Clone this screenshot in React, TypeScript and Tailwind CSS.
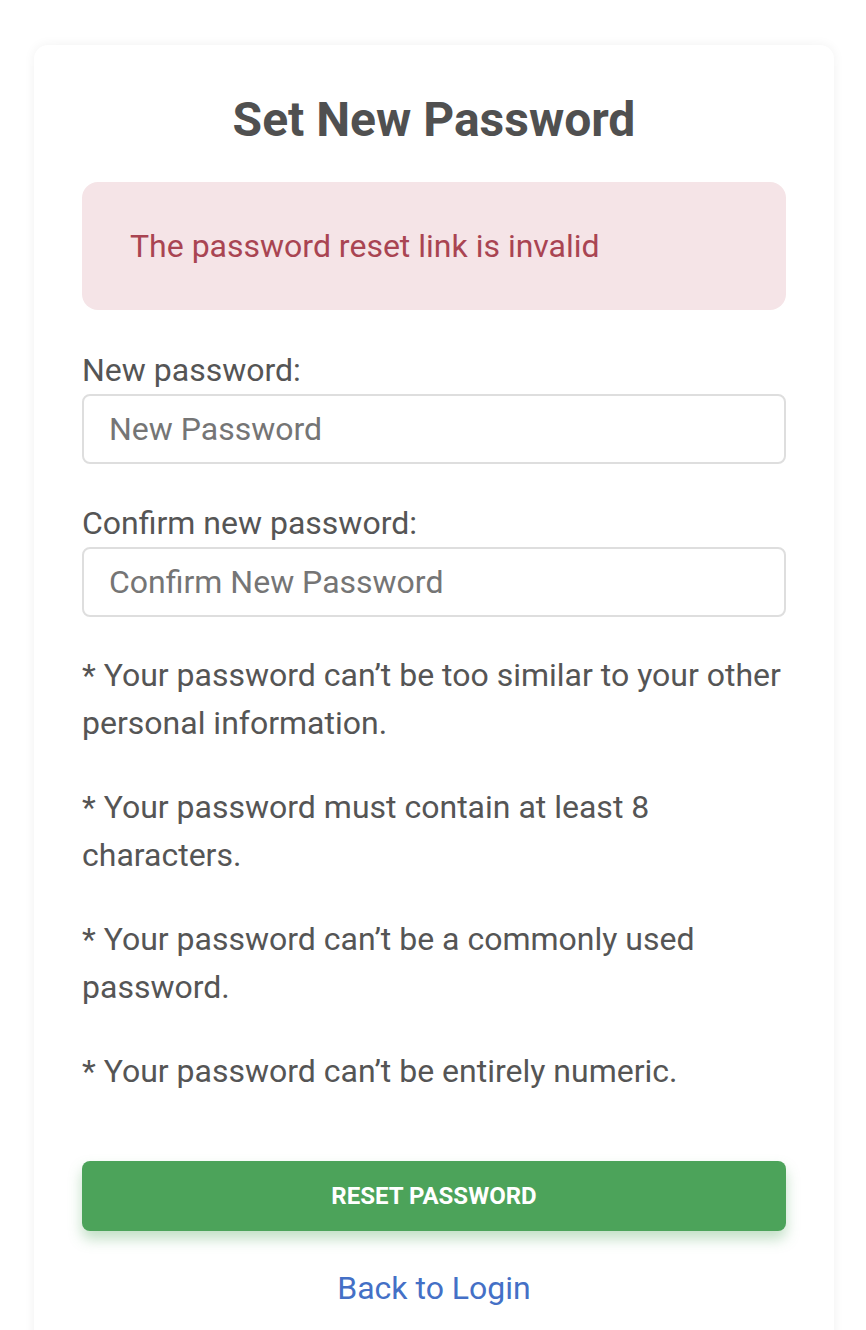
export default function App() {
  const rules = [
    '* Your password can\u2019t be too similar to your other personal information.',
    '* Your password must contain at least 8 characters.',
    '* Your password can\u2019t be a commonly used password.',
    '* Your password can\u2019t be entirely numeric.',
  ]

  return (
    <div className="min-h-screen bg-white font-['Roboto',sans-serif] pt-[45px]">
      <div className="ml-[34px] w-[800px] rounded-[14px] bg-white px-12 pt-12 pb-10 shadow-[0_0_12px_rgba(0,0,0,0.06)]">
        <h1 className="text-center text-[48px] leading-[54px] font-bold text-[#505050] mb-[35px]">
          Set New Password
        </h1>

        {/* Error alert */}
        <div className="rounded-[16px] bg-[#f5e4e7] px-12 py-12 text-[32px] leading-[32px] text-[#a94452] mb-[36px]">
          The password reset link is invalid
        </div>

        <form className="flex flex-col">
          <label className="text-[32px] leading-[48px] text-[#555]">New password:</label>
          <input
            type="password"
            placeholder="New Password"
            className="h-[70px] rounded-[8px] border-2 border-[#dedede] px-[25px] text-[32px] text-[#444] placeholder:text-[#757575] outline-none mb-[35px]"
          />

          <label className="text-[32px] leading-[48px] text-[#555]">Confirm new password:</label>
          <input
            type="password"
            placeholder="Confirm New Password"
            className="h-[70px] rounded-[8px] border-2 border-[#dedede] px-[25px] text-[32px] text-[#444] placeholder:text-[#757575] outline-none mb-[34px]"
          />

          <div className="flex flex-col gap-[36px] text-[32px] leading-[48px] text-[#555]">
            {rules.map((r) => (
              <p key={r}>{r}</p>
            ))}
          </div>

          <button
            type="button"
            className="mt-[66px] h-[70px] rounded-[8px] bg-[#4ca35a] text-[24px] font-bold text-white shadow-[0_8px_14px_rgba(76,163,90,0.35)]"
          >
            RESET PASSWORD
          </button>
        </form>

        <div className="mt-[33px] text-center">
          <a href="#" className="text-[32px] leading-[48px] text-[#4470c6]">
            Back to Login
          </a>
        </div>
      </div>
    </div>
  )
}
